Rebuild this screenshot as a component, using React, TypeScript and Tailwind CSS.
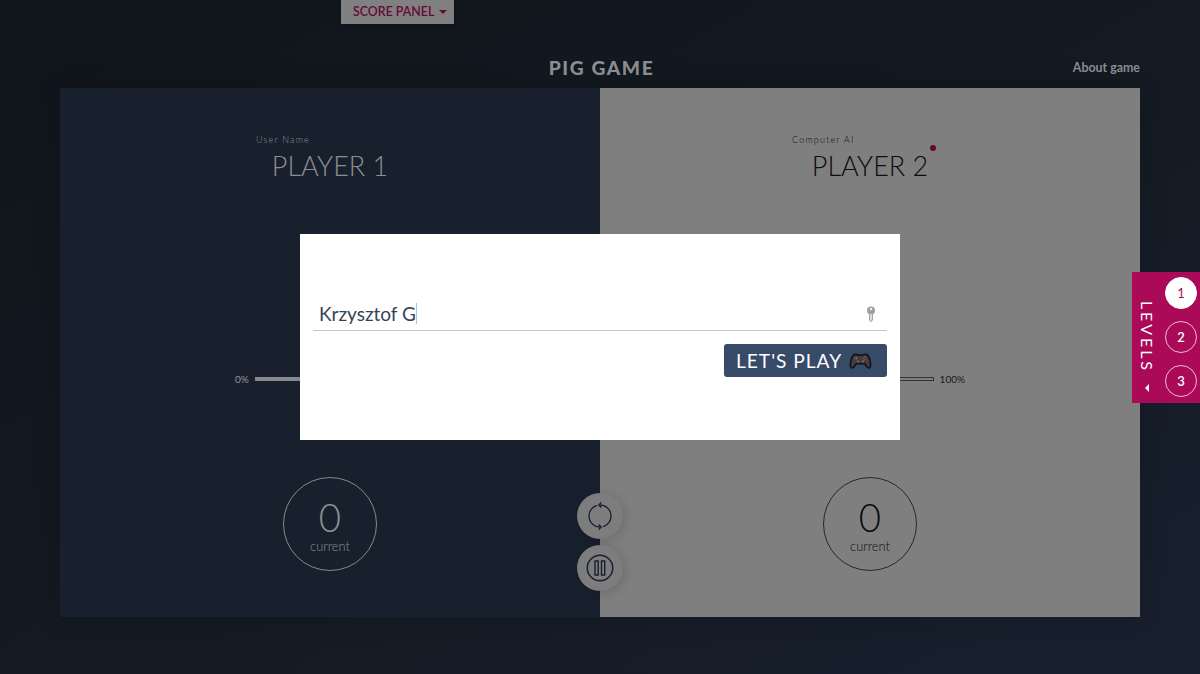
import React from "react";

type PlayerProps = {
  label: string;
  name: string;
  dark?: boolean;
  active?: boolean;
};

function Player({ label, name, dark = false, active = false }: PlayerProps) {
  return (
    <section
      className={
        dark
          ? "flex w-[540px] flex-col items-center bg-[#19202d] text-[#8b8e94]"
          : "flex w-[540px] flex-col items-center bg-[#7f7f7f] text-[#0b0d10]"
      }
    >
      <div className={dark ? "mt-[46px] flex w-[148px] flex-col" : "mt-[46px] flex w-[156px] flex-col"}>
        <span className="h-3 text-[9px] leading-3 font-light tracking-[1.2px]">{label}</span>
        <h2 className="relative mt-1 self-center text-[27px] leading-8 font-light whitespace-nowrap">
          {name}
          {active && (
            <span className="absolute -top-[5px] -right-[8px] size-[6px] rounded-full bg-[#5e0a33]" />
          )}
        </h2>
      </div>
      <div
        className={
          dark
            ? "mt-[295px] flex size-[94px] flex-col items-center rounded-full border border-[#85888d]"
            : "mt-[295px] flex size-[94px] flex-col items-center rounded-full border border-[#25282c]"
        }
      >
        <span className="mt-[19px] text-[38.4px] leading-10 font-light">0</span>
        <span className="mt-px text-[12.8px] leading-4 font-light">current</span>
      </div>
    </section>
  );
}

function RestartIcon() {
  return (
    <svg viewBox="0 0 28 28" className="size-7" fill="none" stroke="#17202e" strokeWidth="1.3">
      <path d="M11 3.4A11 11 0 0 0 11 24.6Q12.5 25 14.5 25" />
      <path d="M17 24.6A11 11 0 0 0 17 3.4Q15.5 3 13.5 3" />
      <path d="M15.3 .5L12.8 3L15.3 5.5M12.7 22.5L15.2 25L12.7 27.5" />
    </svg>
  );
}

function PauseIcon() {
  return (
    <svg viewBox="0 0 28 28" className="size-7" fill="none" stroke="#17202e">
      <circle cx="14" cy="14" r="12.7" strokeWidth="1.5" />
      <path d="M9 7h3.2v14H9zM15.5 7h3.2v14h-3.2z" strokeWidth="1.4" />
    </svg>
  );
}

function KeyIcon() {
  return (
    <svg viewBox="0 0 10 17" className="h-[17px] w-[10px]">
      <circle cx="5" cy="4.5" r="4" fill="#a0a0a0" />
      <circle cx="5" cy="3" r="1.2" fill="#eee" />
      <path d="M3.6 8v6.3L5 15.6l1.4-1.3V8" fill="#e4e4e4" stroke="#999" strokeWidth="1" />
    </svg>
  );
}

function GamepadIcon() {
  return (
    <svg viewBox="0 0 24 18" className="mt-0.5 h-[17px] w-[23px]">
      <path
        d="M6.2 1.5C8 1 8.6 2.2 10 2.2h4c1.4 0 2-1.2 3.8-.7 3 .8 4.5 6 4.9 10.5.3 3.7-2.2 5-4.1 2.4L16.5 11.3h-9L5.4 14.4C3.5 17 1 15.7 1.3 12 1.7 7.5 3.2 2.3 6.2 1.5Z"
        fill="#443d3b"
        stroke="#11151a"
        strokeWidth="1.8"
      />
      <path d="M6 5.5h3M7.5 4v3" stroke="#6f6965" strokeWidth="1.2" />
      <circle cx="9.5" cy="9" r="1.3" fill="#706762" />
      <circle cx="14.5" cy="9" r="1.3" fill="#706762" />
      <circle cx="16.5" cy="4" r=".7" fill="#8d7748" />
      <circle cx="18.2" cy="5.6" r=".7" fill="#85504b" />
      <circle cx="14.9" cy="5.6" r=".7" fill="#5c7280" />
      <circle cx="16.5" cy="7.2" r=".7" fill="#667658" />
    </svg>
  );
}

export default function App() {
  return (
    <div className="relative flex h-[674px] w-[1200px] flex-col overflow-hidden bg-linear-to-br from-[#10151b] via-[#141a22] to-[#18202f] font-['Lato',sans-serif]">
      <button className="ml-[341px] flex h-6 w-[113px] items-start bg-[#808080] pt-[4px] pl-[12px] text-[12.4px] leading-4 font-semibold text-[#650a36] shadow-sm">
        SCORE PANEL
        <span className="mt-[6px] ml-[5px] h-0 w-0 border-x-[4px] border-t-[4px] border-x-transparent border-t-[#650a36]" />
      </button>

      <header className="grid h-16 grid-cols-3 items-end px-[60px] pb-[8px] text-[#8c8e91]">
        <h1 className="col-start-2 pl-[3px] text-center text-[19.2px] leading-6 font-black tracking-[1.6px]">
          PIG GAME
        </h1>
        <a className="text-right text-[12.4px] leading-6 font-bold">About game</a>
      </header>

      <main className="ml-[60px] flex h-[529px] w-[1080px] shadow-[0_0_24px_rgba(0,0,0,0.18)]">
        <Player label="User Name" name="PLAYER 1" dark />
        <Player label="Computer AI" name="PLAYER 2" active />
      </main>

      <div className="absolute top-[371px] left-[235px] flex h-4 w-[730px] items-center gap-1.5 text-[10px]">
        <span className="text-[#94969a]">0%</span>
        <div className="flex h-1 flex-1">
          <div className="w-1/2 bg-[#85888d]" />
          <div className="w-1/2 border border-[#303236]" />
        </div>
        <span className="text-[#17191c]">100%</span>
      </div>

      <div className="absolute top-[492.5px] left-[577px] flex flex-col gap-1.5">
        <button className="flex size-[46px] items-center justify-center rounded-full bg-[#7d7d7e] shadow-[2px_2px_12px_rgba(0,0,0,0.15)]">
          <RestartIcon />
        </button>
        <button className="flex size-[46px] items-center justify-center rounded-full bg-[#7d7d7e] shadow-[2px_2px_12px_rgba(0,0,0,0.15)]">
          <PauseIcon />
        </button>
      </div>

      <div className="absolute top-[234px] left-[300px] flex h-[206px] w-[600px] flex-col bg-white px-[13px] pt-[63px]">
        <div className="flex h-[34px] items-center border-b border-[#c4c8cd] pr-[11px] pl-[6px]">
          <span className="pt-px text-[19px] leading-6 text-[#34435a]">Krzysztof G</span>
          <span className="h-[21px] w-px bg-[#a9c3e2]" />
          <span className="mt-px ml-auto">
            <KeyIcon />
          </span>
        </div>
        <button className="mt-[13px] flex h-[33px] w-[163px] items-center self-end rounded-[3px] bg-[#374b68] pl-[12px] text-[19.2px] leading-6 whitespace-nowrap text-white">
          <span className="w-[113px] pt-px text-left tracking-[0.96px]">LET'S PLAY</span>
          <GamepadIcon />
        </button>
      </div>

      <aside className="absolute top-[272px] right-0 flex h-[131px] w-[68px] bg-[#aa0a57] text-white">
        <div className="flex w-[30px] flex-col items-center">
          <span className="mt-[29px] h-[76px] text-[16px] leading-[18px] tracking-[2.9px] [writing-mode:vertical-rl]">
            LEVELS
          </span>
          <span className="mt-[7px] h-0 w-0 border-y-[4px] border-r-[4px] border-y-transparent border-r-white" />
        </div>
        <div className="ml-[3px] flex flex-col gap-[12px] pt-[5px] text-[13px]">
          <span className="flex size-8 items-center justify-center rounded-full border border-white bg-white pt-0.5 text-[#aa0a57]">
            1
          </span>
          <span className="flex size-8 items-center justify-center rounded-full border border-[#eebbd3] pt-0.5 font-semibold">2</span>
          <span className="flex size-8 items-center justify-center rounded-full border border-[#eebbd3] pt-0.5 font-semibold">3</span>
        </div>
      </aside>
    </div>
  );
}
